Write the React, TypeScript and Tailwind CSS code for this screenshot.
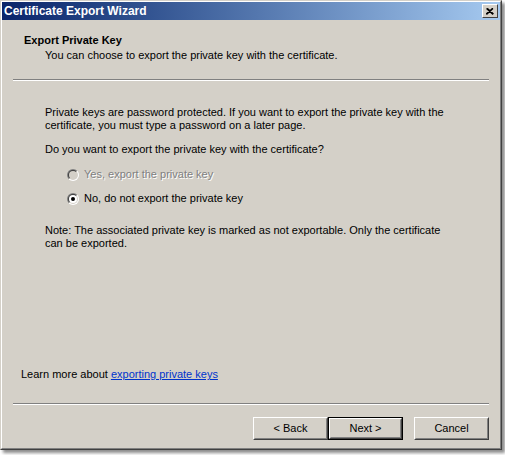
import React, { useId } from "react";

const font = { fontFamily: '"Liberation Sans", Arial, sans-serif' };

function Radio({ checked, disabled }: { checked?: boolean; disabled?: boolean }) {
  const id = useId().replace(/:/g, "");
  const tl = `tl${id}`;
  const br = `br${id}`;
  return (
    <svg width="12" height="12" viewBox="0 0 12 12" className="shrink-0">
      <defs>
        <clipPath id={tl}>
          <polygon points="0,0 12,0 0,12" />
        </clipPath>
        <clipPath id={br}>
          <polygon points="12,0 12,12 0,12" />
        </clipPath>
      </defs>
      <circle cx="6" cy="6" r="6" fill="#808080" clipPath={`url(#${tl})`} />
      <circle cx="6" cy="6" r="6" fill="#ffffff" clipPath={`url(#${br})`} />
      <circle cx="6" cy="6" r="5" fill="#404040" clipPath={`url(#${tl})`} />
      <circle cx="6" cy="6" r="5" fill="#d4d0c8" clipPath={`url(#${br})`} />
      <circle cx="6" cy="6" r="4" fill={disabled ? "#d4d0c8" : "#ffffff"} />
      {checked && <circle cx="6" cy="6" r="2" fill="#000000" />}
    </svg>
  );
}

function Button({ label, def }: { label: string; def?: boolean }) {
  return (
    <div className={def ? "border border-black" : ""}>
      <div
        className={
          "flex items-center justify-center bg-[#d4d0c8] border border-t-white border-l-white border-b-[#404040] border-r-[#404040] " +
          (def ? "w-[73px] h-[21px]" : "w-[75px] h-[23px]")
        }
      >
        <div className="w-full h-full flex items-center justify-center border border-t-[#d4d0c8] border-l-[#d4d0c8] border-b-[#808080] border-r-[#808080] text-[11px] text-black">
          {label}
        </div>
      </div>
    </div>
  );
}

function Separator() {
  return (
    <div className="mx-[11px] border-t border-t-[#808080] border-b border-b-white" />
  );
}

export default function App() {
  return (
    <div className="w-[505px] h-[455px] bg-white" style={font}>
      <div className="w-[502px] h-[450px] bg-[#d4d0c8] border border-t-[#d4d0c8] border-l-[#d4d0c8] border-r-[#404040] border-b-[#404040] shadow-[3px_3px_3px_rgba(0,0,0,0.45)]">
        <div className="w-full h-full border border-t-white border-l-white border-r-[#808080] border-b-[#808080] flex flex-col">
          {/* title bar */}
          <div className="h-[18px] flex items-center justify-between bg-gradient-to-r from-[#0a246a] to-[#a6caf0] pl-[2px] pr-[2px]">
            <span className="text-white font-bold text-[12px] leading-none">Certificate Export Wizard</span>
            <div className="w-[16px] h-[14px] bg-[#d4d0c8] border border-t-white border-l-white border-b-[#404040] border-r-[#404040] flex items-center justify-center">
              <svg width="8" height="7" viewBox="0 0 8 7">
                <path d="M0.5 0.5 L7 6.5 M1.5 0.5 L7.5 6 M7 0.5 L0.5 6.5 M6.5 0.5 L0 6" stroke="#000" strokeWidth="1.2" fill="none" />
              </svg>
            </div>
          </div>

          {/* header */}
          <div className="pt-[13px] text-[11px] leading-[14px] text-black">
            <div className="pl-[22px] font-bold">Export Private Key</div>
            <div className="pl-[43px] mt-[1px]">You can choose to export the private key with the certificate.</div>
          </div>
          <div className="mt-[17px]">
            <Separator />
          </div>

          {/* body */}
          <div className="pl-[43px] pr-[40px] text-[11px] leading-[13px] text-black">
            <p className="mt-[25px]">
              Private keys are password protected. If you want to export the private key with the
              <br />
              certificate, you must type a password on a later page.
            </p>
            <p className="mt-[11px]">Do you want to export the private key with the certificate?</p>
            <div className="pl-[22px] mt-[12px] flex items-center gap-[5px] h-[13px]">
              <Radio disabled />
              <span className="text-[#808080] [text-shadow:1px_1px_0_#ffffff]">Yes, export the private key</span>
            </div>
            <div className="pl-[22px] mt-[11px] flex items-center gap-[5px] h-[13px]">
              <Radio checked />
              <span>No, do not export the private key</span>
            </div>
            <p className="mt-[19px]">
              Note: The associated private key is marked as not exportable. Only the certificate
              <br />
              can be exported.
            </p>
          </div>

          <div className="flex-1" />

          <div className="pl-[19px] text-[11px] leading-[13px] text-black">
            Learn more about{" "}
            <span className="text-[#0033cc] underline">exporting private keys</span>
          </div>
          <div className="mt-[22px]">
            <Separator />
          </div>
          <div className="mt-[12px] mb-[8px] flex justify-end pr-[11px]">
            <Button label="< Back" />
            <Button label="Next >" def />
            <div className="w-[11px]" />
            <Button label="Cancel" />
          </div>
        </div>
      </div>
    </div>
  );
}
